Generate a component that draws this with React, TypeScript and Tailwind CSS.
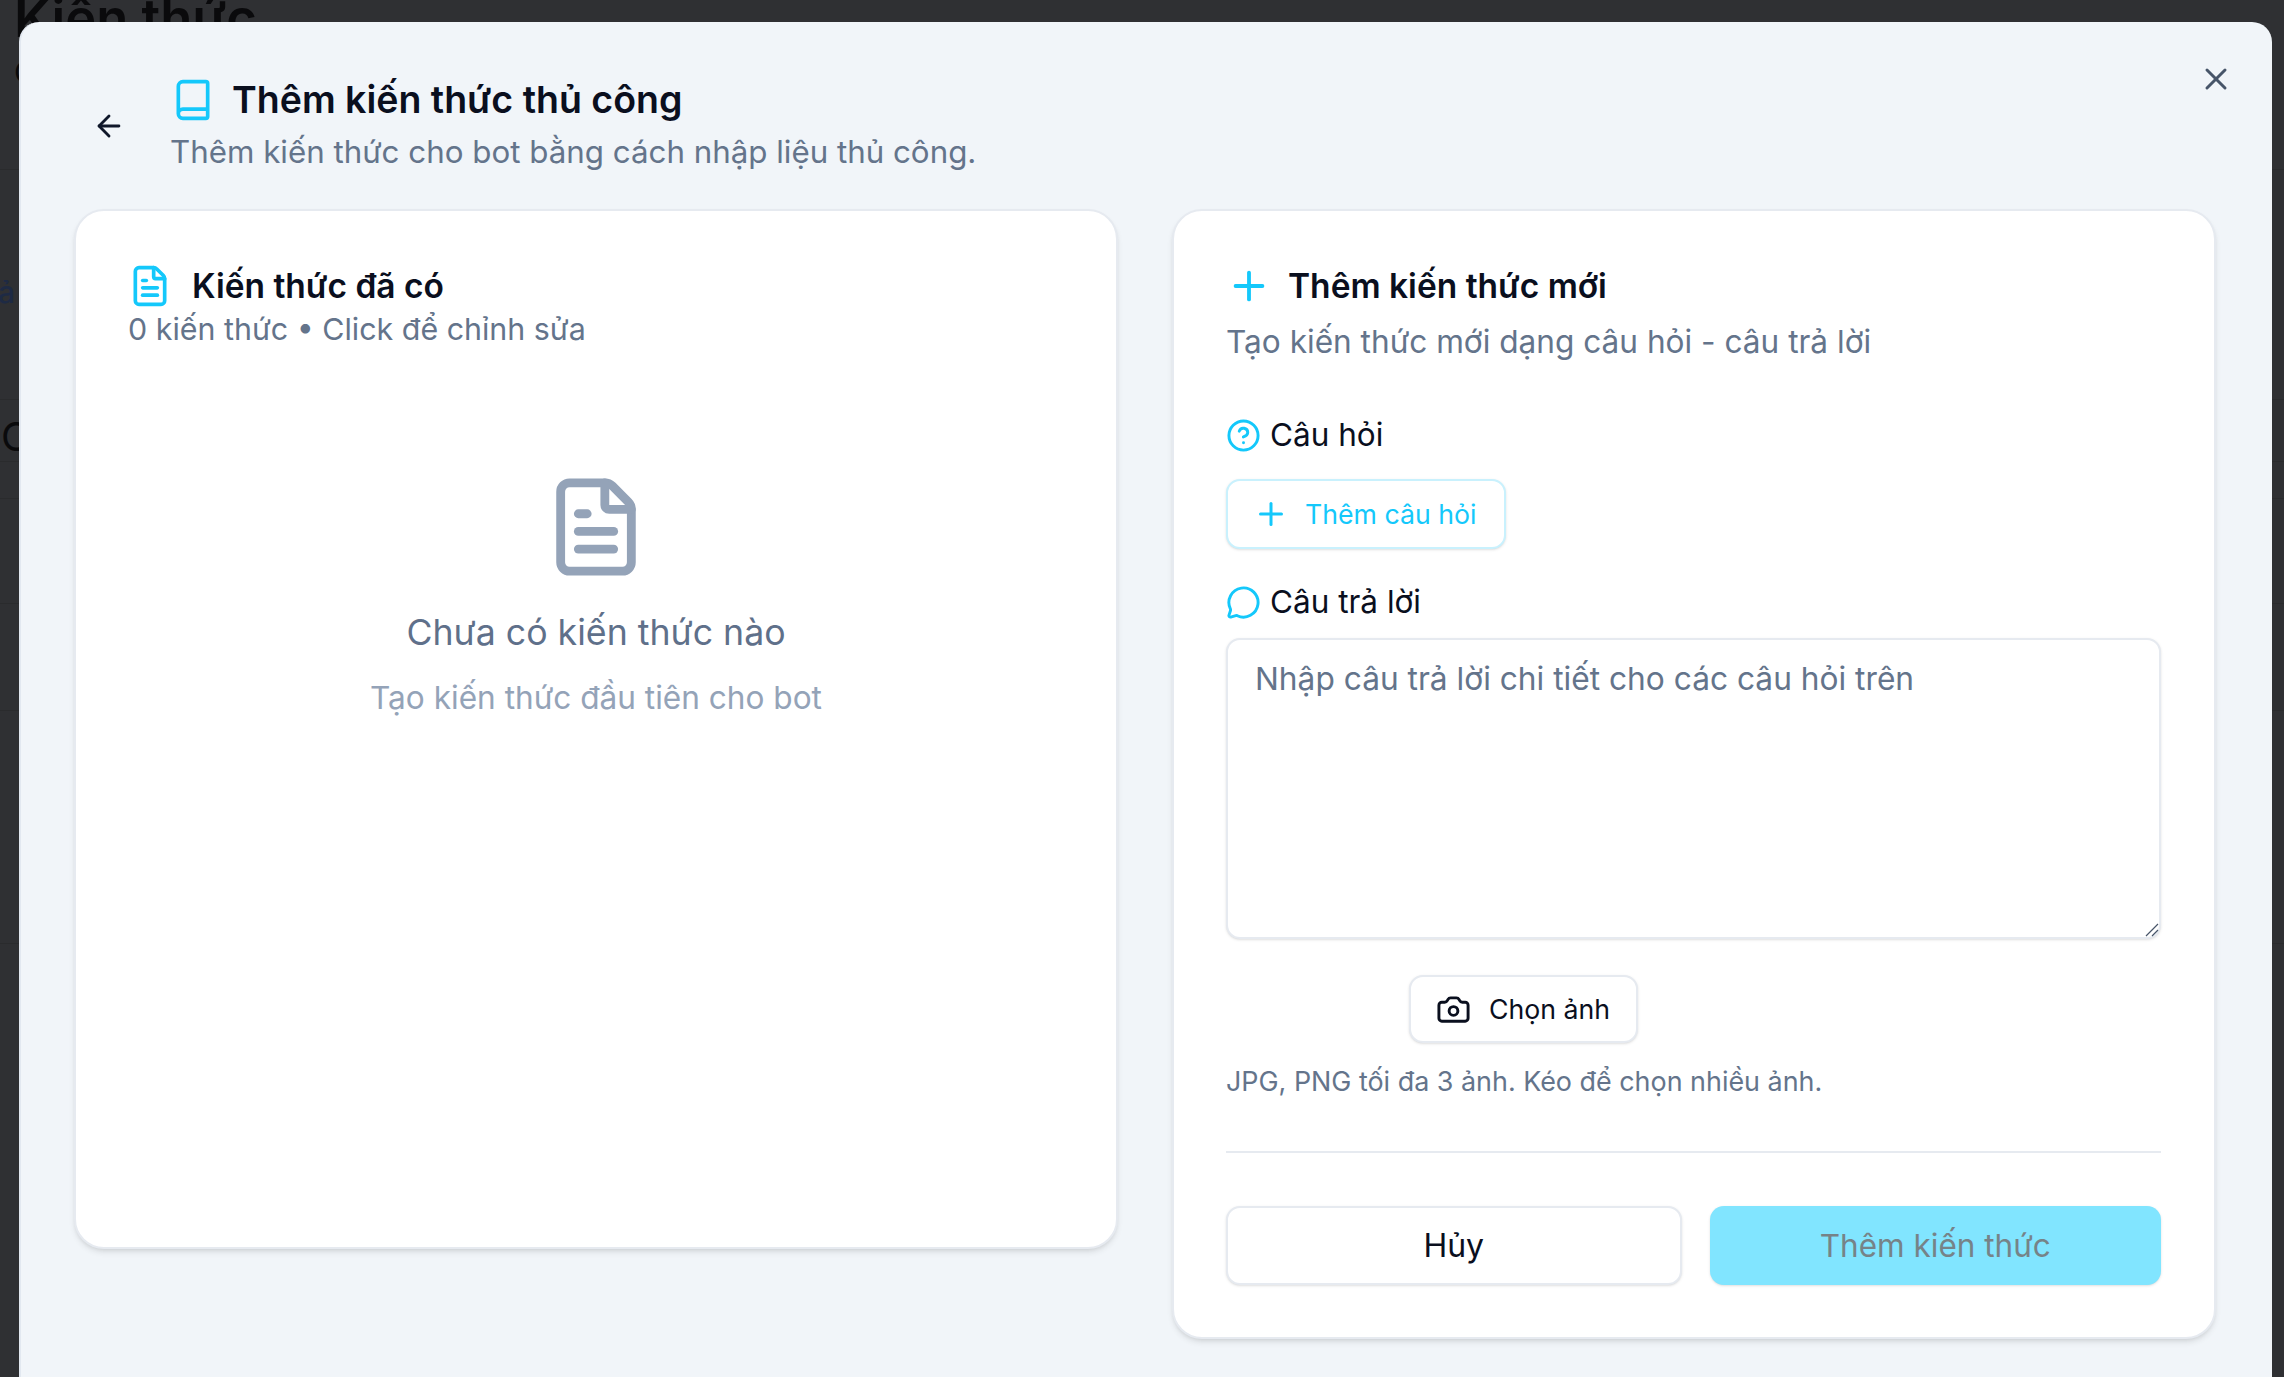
import React from 'react';
import { ArrowLeft, Book, Camera, CircleHelp, FileText, MessageCircle, Plus, X } from 'lucide-react';

const font = 'font-["Inter","Liberation_Sans",sans-serif]';

const App: React.FC = () => {
  return (
    <div className={`relative h-screen w-full overflow-hidden bg-[#2f3033] ${font}`}>
      {/* page behind the dialog, only its left strip shows */}
      <div className="flex flex-col">
        <div className="h-[170px] border-b border-[#2a2b2d] pl-[14px]">
          <div className="-mt-[12px] text-[52.5px] font-semibold leading-[60px] text-[#0a0a0c]">Kiến thức</div>
          <div className="mt-[6px] text-[30px] leading-[36px] text-[#0a0a0c]">C</div>
        </div>
        <div className="flex h-[230px] items-center border-b border-[#2a2b2d] pt-[14px]">
          <span className="-ml-[2px] text-[30px] font-medium leading-[36px] text-[#1e2a44]">ả</span>
        </div>
        <div className="flex h-[62px] items-center border-b border-[#2a2b2d] pt-[12px]">
          <span className="pl-[1px] text-[40px] leading-[44px] text-[#0a0a0c]">C</span>
        </div>
        <div className="h-[37px] border-b border-[#2a2b2d]" />
        <div className="h-[105px] border-b border-[#2a2b2d]" />
        <div className="h-[107px] border-b border-[#2a2b2d]" />
        <div className="h-[233px] border-b border-[#2a2b2d]" />
      </div>

      <div className="absolute left-[19px] top-[22px] h-[1400px] w-[2253px] rounded-[20px] border-l-2 border-[#e2e8f0] bg-[#f1f5f9] pl-[53px] pr-[54px]">
        <button className="absolute right-[38px] top-[39px] text-[#475569]">
          <X size={36} strokeWidth={2} />
        </button>

        {/* header */}
        <div className="flex h-[187px] items-start">
          <ArrowLeft size={34} strokeWidth={2} className="ml-[18px] mt-[87px] text-[#0f172a]" />
          <div className="ml-[44px] pt-[56px]">
            <div className="flex items-center gap-[17px] pl-[1px]">
              <Book size={44} strokeWidth={2} className="text-[#14c8fb]" />
              <h1 className="text-[37.5px] font-semibold leading-[44px] text-[#0a0f1e]">Thêm kiến thức thủ công</h1>
            </div>
            <p className="mt-[10px] text-[31.3px] leading-[40px] text-[#64748b]">Thêm kiến thức cho bot bằng cách nhập liệu thủ công.</p>
          </div>
        </div>

        <div className="flex items-start gap-[54px]">
          {/* existing knowledge */}
          <div className="h-[1040px] w-[1044px] rounded-[30px] border-2 border-[#e6eaf0] bg-white px-[52px] pt-[53px] shadow-md">
            <div className="flex items-center gap-[20px]">
              <FileText size={44} strokeWidth={2} className="text-[#14c8fb]" />
              <h2 className="text-[33.5px] font-semibold leading-[44px] text-[#0a0f1e]">Kiến thức đã có</h2>
            </div>
            <p className="mt-[1px] text-[30.4px] leading-[40px] text-[#64748b]">0 kiến thức • Click để chỉnh sửa</p>
            <div className="mt-[125px] flex flex-col items-center">
              <FileText size={106} strokeWidth={2} className="text-[#94a3b8]" />
              <p className="mt-[30px] text-[35.7px] leading-[44px] text-[#5f708a]">Chưa có kiến thức nào</p>
              <p className="mt-[22px] text-[31.6px] leading-[44px] text-[#94a3b8]">Tạo kiến thức đầu tiên cho bot</p>
            </div>
          </div>

          {/* new knowledge */}
          <div className="h-[1130px] w-[1044px] rounded-[30px] border-2 border-[#e6eaf0] bg-white px-[52px] pt-[52px] shadow-md">
            <div className="flex items-center gap-[16px]">
              <Plus size={46} strokeWidth={2} className="text-[#14c8fb]" />
              <h2 className="text-[33.5px] font-semibold leading-[44px] text-[#0a0f1e]">Thêm kiến thức mới</h2>
            </div>
            <p className="mt-[13px] text-[31.6px] leading-[40px] text-[#64748b]">Tạo kiến thức mới dạng câu hỏi - câu trả lời</p>

            <div className="mt-[53px] flex items-center gap-[9px]">
              <CircleHelp size={35} strokeWidth={2} className="text-[#14c8fb]" />
              <span className="text-[31.5px] leading-[40px] text-[#0a0f1e]">Câu hỏi</span>
            </div>
            <button className="mt-[24px] flex h-[70px] w-[280px] items-center gap-[16px] rounded-[14px] border-2 border-[#c9f1fd] bg-white pl-[25px] text-[26.7px] text-[#14c8fb] shadow-sm">
              <Plus size={36} strokeWidth={2} />
              Thêm câu hỏi
            </button>

            <div className="mt-[33px] flex items-center gap-[9px]">
              <MessageCircle size={35} strokeWidth={2} className="text-[#14c8fb]" />
              <span className="text-[31.5px] leading-[40px] text-[#0a0f1e]">Câu trả lời</span>
            </div>
            <div className="relative mt-[16px] w-[935px]">
              <textarea
                className="block h-[301px] w-full resize-none rounded-[14px] border-2 border-[#e6eaf0] bg-white px-[27px] py-[19px] text-[31.7px] leading-[40px] shadow-sm outline-none placeholder:text-[#64748b]"
                placeholder="Nhập câu trả lời chi tiết cho các câu hỏi trên"
              />
              <svg className="absolute bottom-[2px] right-[2px] h-[14px] w-[14px] text-[#475569]" viewBox="0 0 14 14" fill="none" stroke="currentColor" strokeWidth="1.2">
                <path d="M1 13 13 1M7 13l6-6" />
              </svg>
            </div>

            <button className="ml-[183px] mt-[36px] flex h-[68px] w-[229px] items-center gap-[18px] rounded-[14px] border-2 border-[#e6eaf0] bg-white pl-[25px] text-[26.7px] text-[#0a0f1e] shadow-sm">
              <Camera size={35} strokeWidth={2} />
              Chọn ảnh
            </button>
            <p className="mt-[20px] text-[26.9px] leading-[36px] text-[#64748b]">JPG, PNG tối đa 3 ảnh. Kéo để chọn nhiều ảnh.</p>

            <div className="mt-[52px] h-[2px] w-[935px] bg-[#e6eaf0]" />

            <div className="mt-[53px] flex w-[935px] gap-[28px]">
              <button className="h-[79px] flex-1 rounded-[14px] border-2 border-[#e6eaf0] bg-white text-[32px] text-[#0a0f1e] shadow-sm">Hủy</button>
              <button className="h-[79px] flex-1 rounded-[14px] bg-[#81e5ff] text-[31.5px] text-[#768388] shadow-sm">Thêm kiến thức</button>
            </div>
          </div>
        </div>
      </div>
    </div>
  );
};

export default App;
